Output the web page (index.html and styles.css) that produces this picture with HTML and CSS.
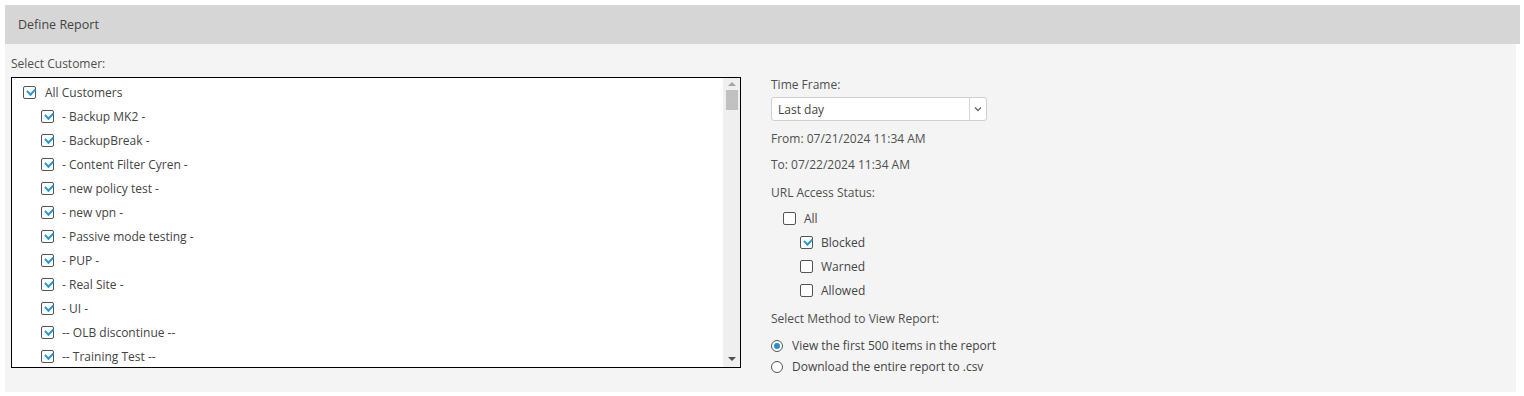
FILE: index.html
```html
<!DOCTYPE html>
<html lang="en">
<head>
<meta charset="UTF-8">
<title>Define Report</title>
<link rel="stylesheet" href="styles.css">
</head>
<body>

<div class="card">
  <div class="card-head">Define Report</div>

  <div class="card-body">
    <!-- customers -->
    <div class="col-left">
      <div class="lbl">Select Customer:</div>
      <div class="listbox">
        <div class="list">
          <label class="row"><span class="cb on"></span>All Customers</label>
          <label class="row sub"><span class="cb on"></span>- Backup MK2 -</label>
          <label class="row sub"><span class="cb on"></span>- BackupBreak -</label>
          <label class="row sub"><span class="cb on"></span>- Content Filter Cyren -</label>
          <label class="row sub"><span class="cb on"></span>- new policy test -</label>
          <label class="row sub"><span class="cb on"></span>- new vpn -</label>
          <label class="row sub"><span class="cb on"></span>- Passive mode testing -</label>
          <label class="row sub"><span class="cb on"></span>- PUP -</label>
          <label class="row sub"><span class="cb on"></span>- Real Site -</label>
          <label class="row sub"><span class="cb on"></span>- UI -</label>
          <label class="row sub"><span class="cb on"></span>-- OLB discontinue --</label>
          <label class="row sub"><span class="cb on"></span>-- Training Test --</label>
        </div>
        <div class="sbar">
          <span class="arr up"></span>
          <span class="thumb"></span>
          <span class="arr down"></span>
        </div>
      </div>
    </div>

    <!-- options -->
    <div class="col-right">
      <div class="lbl">Time Frame:</div>
      <div class="select">
        <span class="sel-val">Last day</span>
        <span class="sel-btn">
          <svg width="8" height="6" viewBox="0 0 8 6"><path d="M1 1.5l3 3 3-3" fill="none" stroke="#666" stroke-width="1.3"/></svg>
        </span>
      </div>
      <div class="lbl from">From: 07/21/2024 11:34 AM</div>
      <div class="lbl to">To: 07/22/2024 11:34 AM</div>

      <div class="lbl status">URL Access Status:</div>
      <div class="opts">
        <label class="row lvl1"><span class="cb"></span>All</label>
        <label class="row lvl2"><span class="cb on"></span>Blocked</label>
        <label class="row lvl2"><span class="cb"></span>Warned</label>
        <label class="row lvl2"><span class="cb"></span>Allowed</label>
      </div>

      <div class="lbl method">Select Method to View Report:</div>
      <label class="radio-row"><span class="rd on"></span>View the first 500 items in the report</label>
      <label class="radio-row"><span class="rd"></span>Download the entire report to .csv</label>
    </div>
  </div>
</div>

</body>
</html>
```

FILE: styles.css
```css
*{margin:0;padding:0;box-sizing:border-box}
body{background:#fff;font-family:'Open Sans',sans-serif;font-size:12px;color:#444;padding:5px 4px 0 5px}

/* ---------------- Card ---------------- */
.card{display:flex;flex-direction:column}
.card-head{height:39px;background:#d6d6d6;padding-left:13px;display:flex;align-items:center;font-size:12.5px;color:#444}
.card-body{display:flex;align-items:flex-start;gap:30px;background:#f4f4f4;margin-right:4px;padding:12px 6px 0}

.lbl{line-height:16px;color:#505050}

/* ---------------- Customer list ---------------- */
.col-left{padding-bottom:22px}
.listbox{margin-top:5px;width:730px;height:291px;border:1px solid #000;background:#fff;display:flex}
.list{flex:1;padding:2px 0 0 11px;overflow:hidden}
.row{display:flex;align-items:center;height:24px;color:#444;white-space:nowrap}
.row.sub{padding-left:18px}
.row .cb{margin-right:9px}
.row.sub .cb{margin-right:8px}

.sbar{width:17px;background:#efefef;display:flex;flex-direction:column;align-items:center}
.thumb{width:12px;height:20px;background:#c1c1c1;margin-top:4px}
.arr{width:0;height:0;border-left:4px solid transparent;border-right:4px solid transparent}
.arr.up{border-bottom:4px solid #a3a3a3;margin-top:4px}
.arr.down{border-top:4px solid #505050;margin-top:auto;margin-bottom:6px}

/* ---------------- Checkbox / radio ---------------- */
.cb{width:13px;height:13px;flex:0 0 13px;border:1px solid #555;border-radius:2px;background:#fff;position:relative}
.cb.on::after{content:"";position:absolute;left:2.5px;top:1.8px;width:6px;height:3.5px;border-left:2px solid #2899da;border-bottom:2px solid #2899da;transform:rotate(-45deg)}

.rd{width:12px;height:12px;flex:0 0 12px;border:1px solid #555;border-radius:50%;background:#fff;position:relative;margin-right:9px}
.rd.on::after{content:"";position:absolute;inset:2px;border-radius:50%;background:#1f93d6}

/* ---------------- Right column ---------------- */
.col-right{margin:21px 0 15px;width:216px;white-space:nowrap}
.select{margin-top:4px;height:24px;width:216px;border:1px solid #cfcfcf;border-radius:3px;background:#fff;display:flex;align-items:center}
.sel-val{flex:1;padding-left:6px;color:#444}
.sel-btn{width:17px;height:22px;border-left:1px solid #d8d8d8;display:flex;align-items:center;justify-content:center}

.from{margin-top:10px}
.to{margin-top:10px}
.status{margin-top:12px}
.opts{margin-top:5px}
.row.lvl1{padding-left:12px}
.row.lvl2{padding-left:29px}
.opts .row .cb{margin-right:8px}

.method{margin-top:9px}
.radio-row{display:flex;align-items:center;height:21px;color:#444}
.method + .radio-row{margin-top:8px}
```
